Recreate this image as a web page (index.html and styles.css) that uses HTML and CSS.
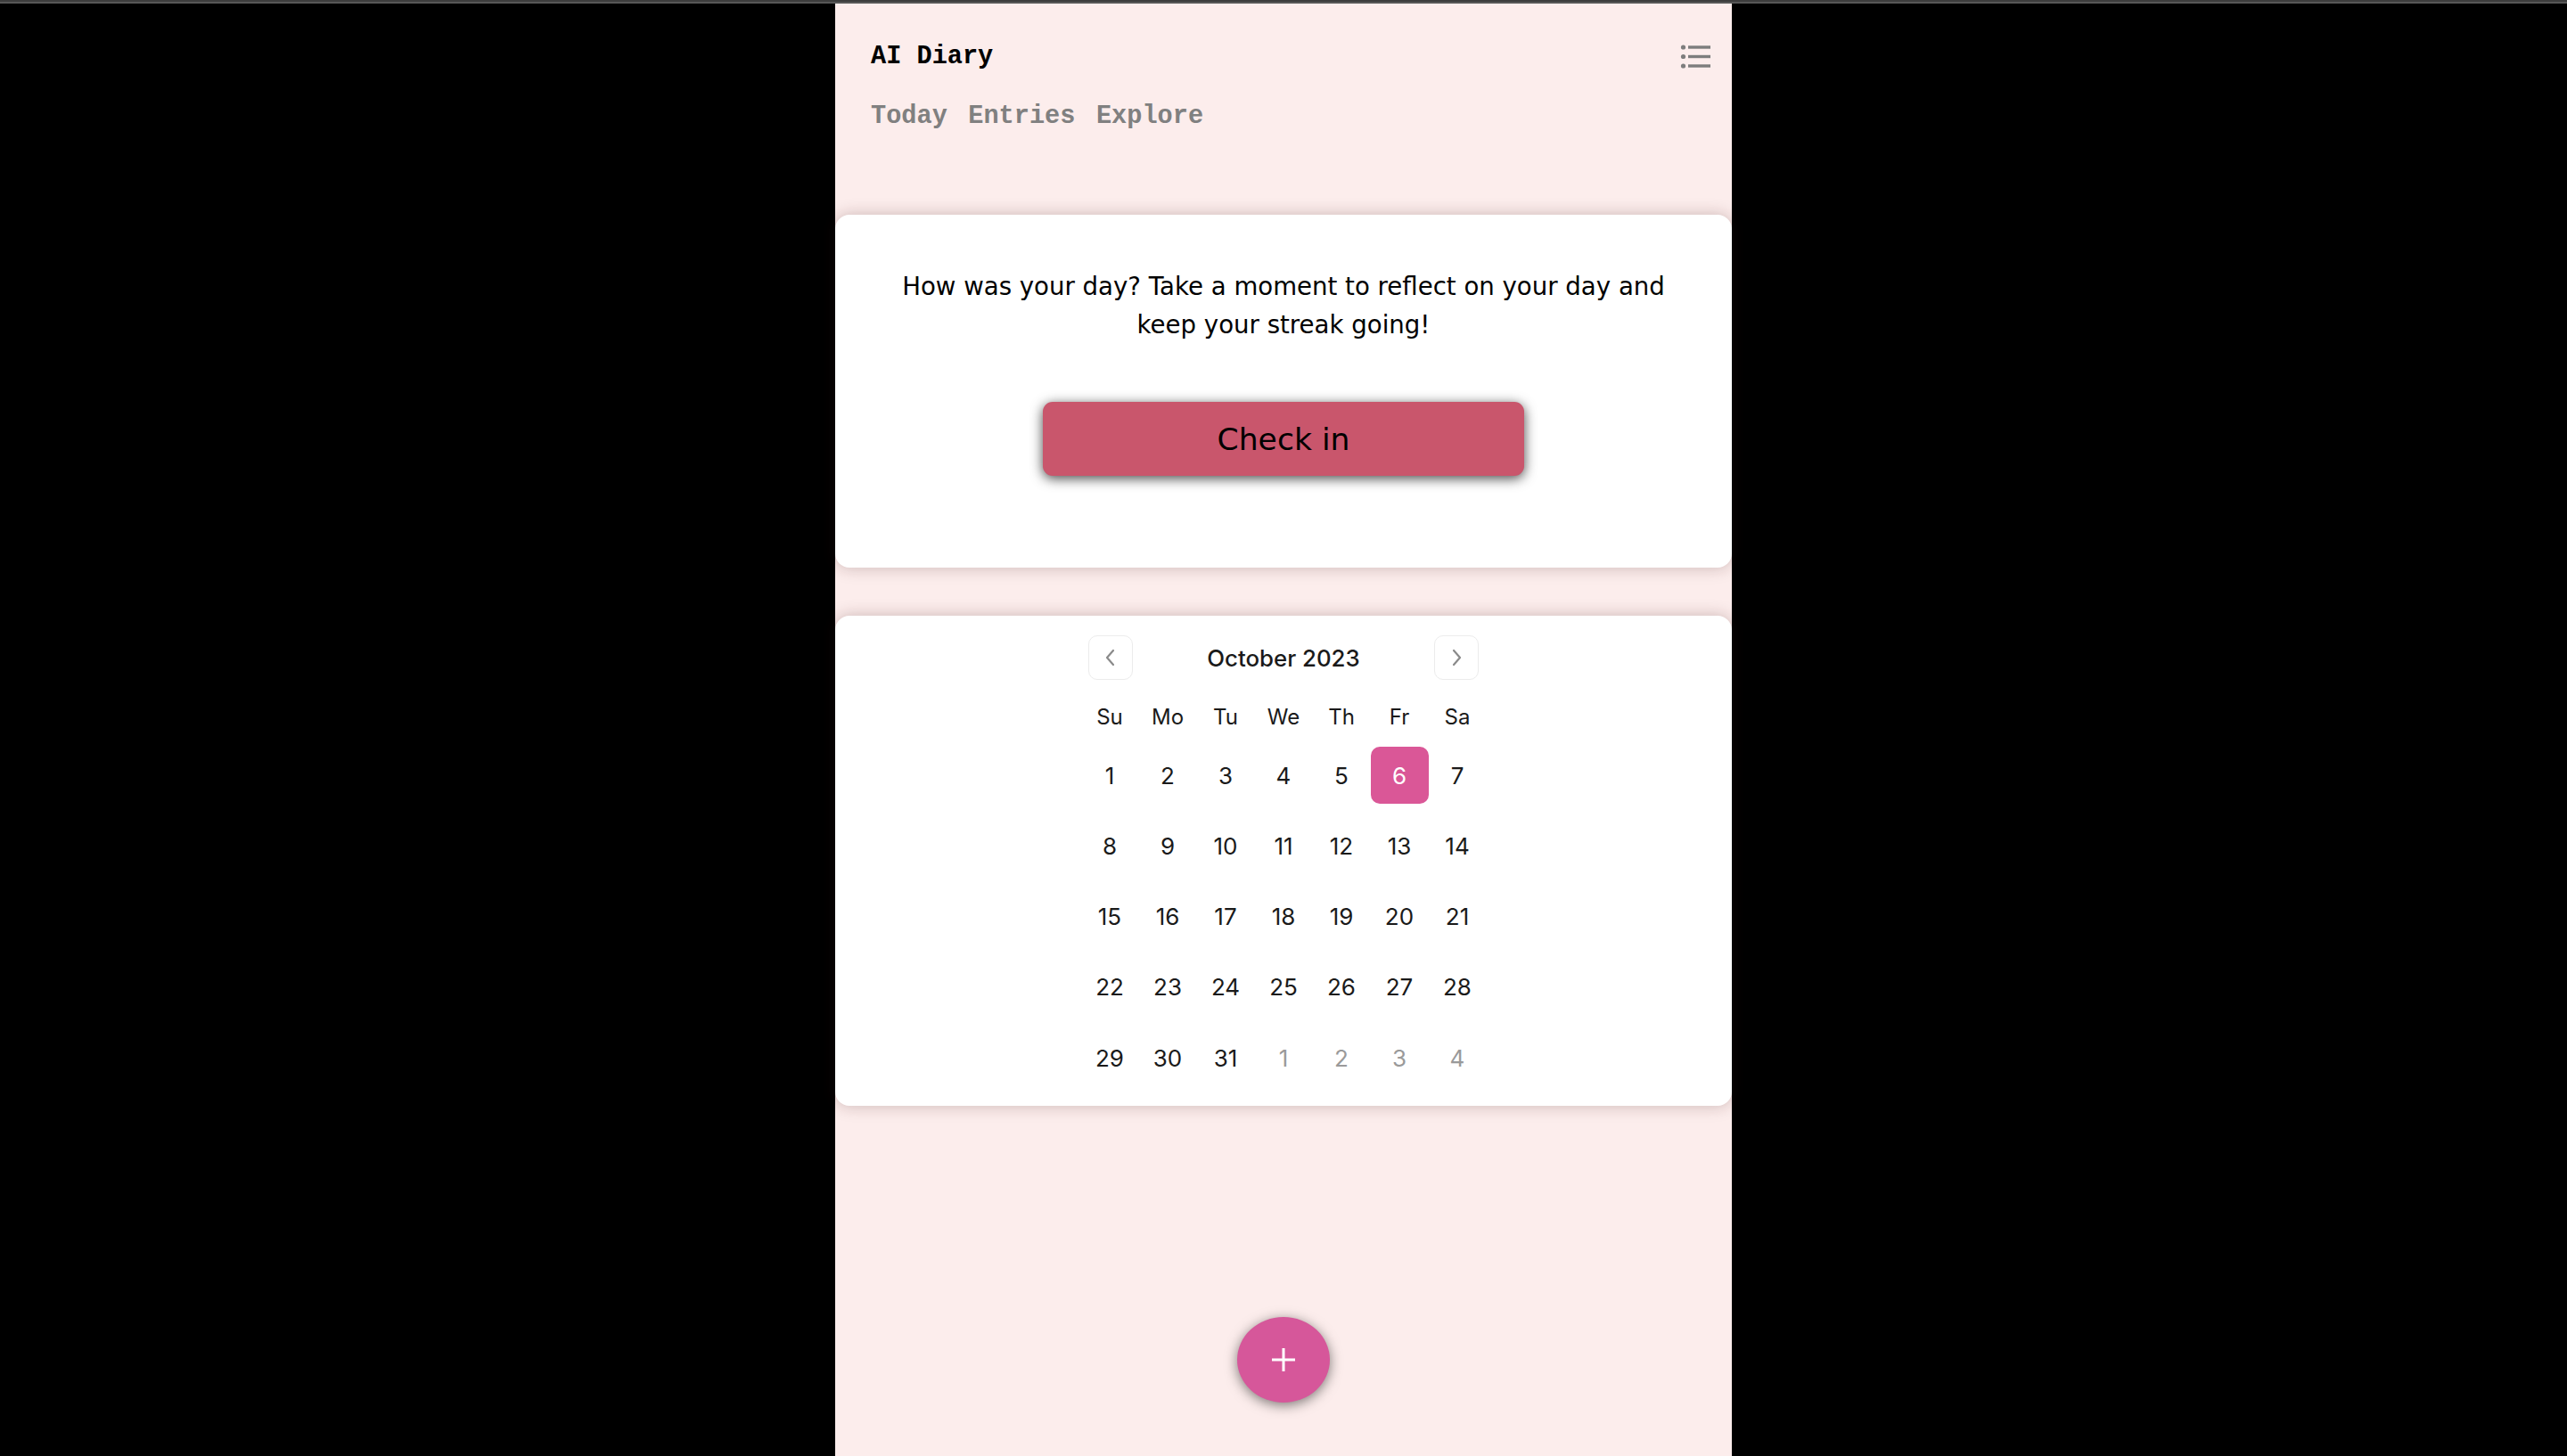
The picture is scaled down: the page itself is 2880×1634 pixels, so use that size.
FILE: index.html
```html
<!DOCTYPE html>
<html lang="en">
<head>
<meta charset="utf-8">
<title>AI Diary</title>
<link rel="stylesheet" href="styles.css">
</head>
<body>
<div class="topband"></div>
<div class="app">
  <header class="header">
    <div class="header-row">
      <h1 class="title">AI Diary</h1>
      <button class="menu-btn" aria-label="Menu">
        <svg width="36" height="30" viewBox="0 0 36 30">
          <circle cx="3.5" cy="4" r="2.6" fill="#7d7d7d"/>
          <circle cx="3.5" cy="14.5" r="2.6" fill="#7d7d7d"/>
          <circle cx="3.5" cy="25" r="2.6" fill="#7d7d7d"/>
          <rect x="9" y="2.3" width="25" height="3.4" fill="#7d7d7d"/>
          <rect x="9" y="12.8" width="25" height="3.4" fill="#7d7d7d"/>
          <rect x="9" y="23.3" width="25" height="3.4" fill="#7d7d7d"/>
        </svg>
      </button>
    </div>
    <nav class="nav">
      <a class="nav-link">Today</a>
      <a class="nav-link">Entries</a>
      <a class="nav-link">Explore</a>
    </nav>
  </header>

  <main class="content">
    <section class="card checkin-card">
      <p class="prompt">How was your day? Take a moment to reflect on your day and keep your streak going!</p>
      <button class="checkin-btn">Check in</button>
    </section>

    <section class="card calendar-card">
      <div class="calendar">
        <div class="cal-header">
          <button class="cal-nav" aria-label="Previous month">
            <svg width="14" height="20" viewBox="0 0 14 20"><path d="M10 2 L3 10 L10 18" fill="none" stroke="#8a8a8a" stroke-width="2.2" stroke-linecap="round" stroke-linejoin="round"/></svg>
          </button>
          <div class="cal-title">October 2023</div>
          <button class="cal-nav" aria-label="Next month">
            <svg width="14" height="20" viewBox="0 0 14 20"><path d="M4 2 L11 10 L4 18" fill="none" stroke="#8a8a8a" stroke-width="2.2" stroke-linecap="round" stroke-linejoin="round"/></svg>
          </button>
        </div>
        <div class="cal-weekdays">
          <div class="wd">Su</div><div class="wd">Mo</div><div class="wd">Tu</div><div class="wd">We</div><div class="wd">Th</div><div class="wd">Fr</div><div class="wd">Sa</div>
        </div>
        <div class="cal-days">
          <div class="day">1</div><div class="day">2</div><div class="day">3</div><div class="day">4</div><div class="day">5</div><div class="day selected">6</div><div class="day">7</div>
          <div class="day">8</div><div class="day">9</div><div class="day">10</div><div class="day">11</div><div class="day">12</div><div class="day">13</div><div class="day">14</div>
          <div class="day">15</div><div class="day">16</div><div class="day">17</div><div class="day">18</div><div class="day">19</div><div class="day">20</div><div class="day">21</div>
          <div class="day">22</div><div class="day">23</div><div class="day">24</div><div class="day">25</div><div class="day">26</div><div class="day">27</div><div class="day">28</div>
          <div class="day">29</div><div class="day">30</div><div class="day">31</div><div class="day outside">1</div><div class="day outside">2</div><div class="day outside">3</div><div class="day outside">4</div>
        </div>
      </div>
    </section>
  </main>

  <button class="fab" aria-label="New entry">
    <svg width="26" height="26" viewBox="0 0 26 26">
      <rect x="0" y="11.5" width="26" height="3" fill="#fff"/>
      <rect x="11.5" y="0" width="3" height="26" fill="#fff"/>
    </svg>
  </button>
</div>
</body>
</html>
```

FILE: styles.css
```css
* { box-sizing: border-box; }

html, body {
  margin: 0;
  padding: 0;
  background: #000;
}

body {
  height: 1634px;
  overflow: hidden;
}

.topband {
  height: 4px;
  background: #575757;
  border-top: 2px solid #3d3d3d;
}

.app {
  position: relative;
  width: 1006px;
  height: 1630px;
  margin: 0 auto;
  background: #fcedec;
  padding-top: 43px;
}

.header {
  padding: 0 22px 0 40px;
}

.header-row {
  display: flex;
  align-items: center;
  justify-content: space-between;
  height: 33px;
}

.title {
  margin: 0;
  font-family: "Liberation Mono", "Courier New", monospace;
  font-weight: 700;
  font-size: 28.6px;
  line-height: 33px;
  color: #000;
}

.menu-btn {
  border: none;
  background: none;
  padding: 0;
  display: flex;
  margin-top: 0;
}

.nav {
  display: flex;
  gap: 23.5px;
  margin-top: 34px;
}

.nav-link {
  font-family: "Liberation Mono", "Courier New", monospace;
  font-weight: 700;
  font-size: 28.6px;
  line-height: 33px;
  color: #808080;
}

.content {
  margin-top: 94px;
  display: flex;
  flex-direction: column;
  gap: 54px;
}

.card {
  background: #fff;
  border-radius: 16px;
  box-shadow: 0 0 18px rgba(60, 20, 20, 0.25);
}

.checkin-card {
  padding: 59px 40px 103px;
}

.prompt {
  margin: 0 auto;
  max-width: 900px;
  text-align: center;
  font-family: "DejaVu Sans", Verdana, sans-serif;
  font-size: 27.6px;
  line-height: 43px;
  color: #000;
}

.checkin-btn {
  display: block;
  width: 540px;
  height: 83px;
  margin: 65px auto 0;
  border: none;
  border-radius: 11px;
  background: #c9566c;
  color: #000;
  font-family: "DejaVu Sans", Verdana, sans-serif;
  font-size: 34.6px;
  box-shadow: 0 3px 14px rgba(0, 0, 0, 0.72);
}

.calendar-card {
  padding: 22px 0;
}

.calendar {
  width: 455px;
  margin: 0 auto;
  font-family: Inter, "Noto Sans", sans-serif;
  color: #1a1a1a;
}

.cal-header {
  display: flex;
  align-items: center;
  justify-content: space-between;
  height: 50px;
  padding: 0 8.5px;
}

.cal-nav {
  width: 50px;
  height: 50px;
  border: 1px solid #ececec;
  border-radius: 10px;
  background: #fff;
  padding: 0;
  display: flex;
  align-items: center;
  justify-content: center;
}

.cal-title {
  font-size: 25.8px;
  font-weight: 500;
}

.cal-weekdays {
  display: grid;
  grid-template-columns: repeat(7, 65px);
  height: 40px;
  margin-top: 21px;
}

.wd {
  display: flex;
  align-items: center;
  justify-content: center;
  font-size: 24px;
  font-weight: 400;
}

.cal-days {
  display: grid;
  grid-template-columns: repeat(7, 65px);
  grid-auto-rows: 64px;
  row-gap: 15.33px;
  margin-top: 14px;
}

.day {
  display: flex;
  align-items: center;
  justify-content: center;
  font-size: 26px;
  border-radius: 10px;
}

.day.outside {
  color: #9a9a9a;
}

.day.selected {
  background: #da5797;
  color: #fff;
}

.fab {
  position: absolute;
  left: 451px;
  bottom: 60px;
  width: 104px;
  height: 96px;
  border: none;
  border-radius: 50%;
  background: #d6579a;
  box-shadow: 0 3px 14px rgba(0, 0, 0, 0.5);
  display: flex;
  align-items: center;
  justify-content: center;
  padding: 0;
}
```
